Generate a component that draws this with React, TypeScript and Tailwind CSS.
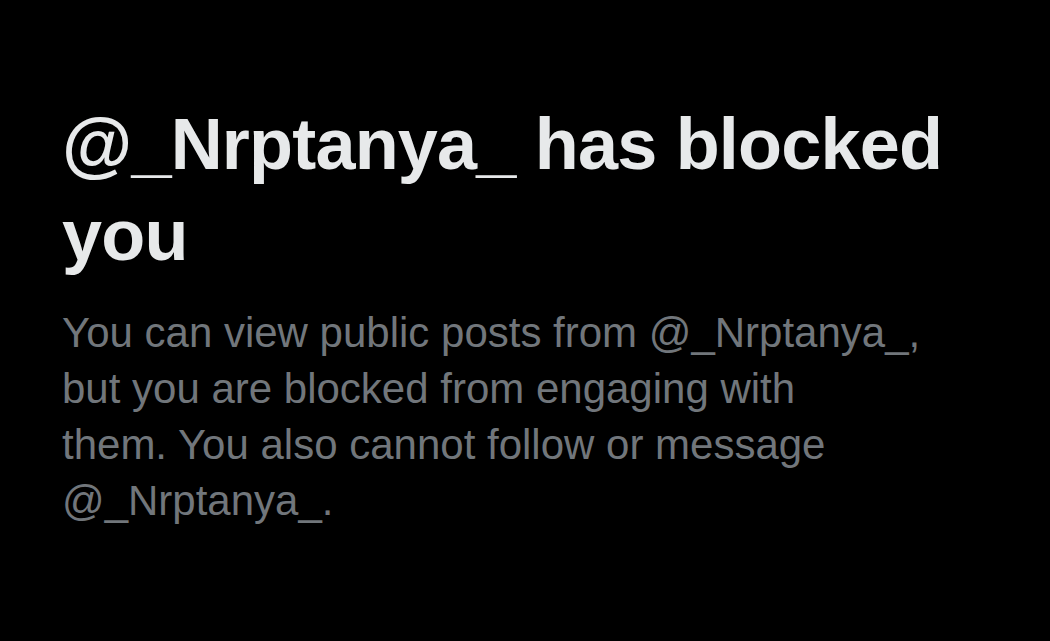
export default function App() {
  return (
    <div className="w-[1050px] h-[641px] bg-black overflow-hidden" style={{ fontFamily: '"Liberation Sans", Arial, sans-serif' }}>
      <div className="pl-[62px] pt-[99px]">
        <h1 className="text-[72px] leading-[91px] font-bold tracking-[-0.8px] text-[#e7e9ea]">
          @_Nrptanya_ has blocked
          <br />
          you
        </h1>
        <p className="mt-[24px] text-[42px] leading-[56px] text-[#71767b]">
          You can view public posts from @_Nrptanya_,
          <br />
          but you are blocked from engaging with
          <br />
          them. You also cannot follow or message
          <br />
          @_Nrptanya_.
        </p>
      </div>
    </div>
  );
}
